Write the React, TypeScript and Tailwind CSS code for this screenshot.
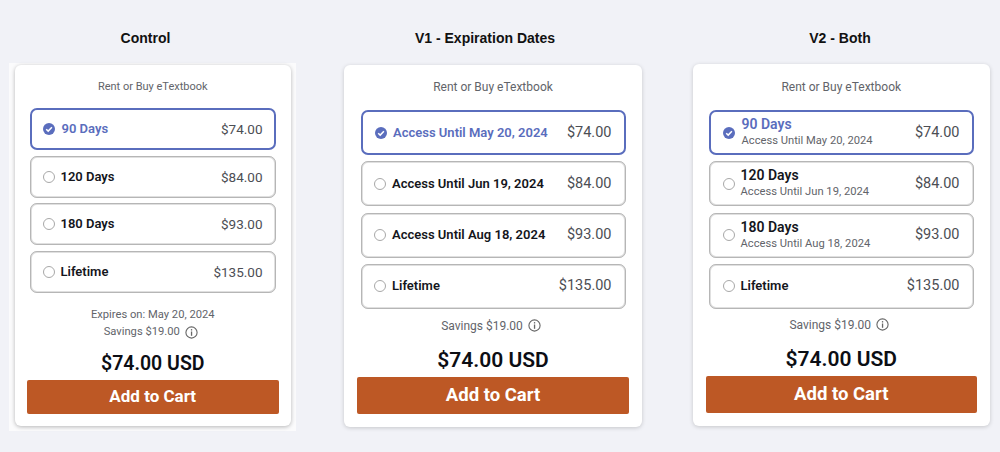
import React from "react";

const roboto = "font-['Roboto',sans-serif]";

function CheckDot({ cls }: { cls: string }) {
  return (
    <svg viewBox="0 0 12 12" className={cls}>
      <circle cx="6" cy="6" r="6" fill="#5a6dbd" />
      <path d="M3.2 6.2 L5.2 8.1 L8.9 4.2" fill="none" stroke="#fff" strokeWidth="1.5" />
    </svg>
  );
}

function InfoIcon() {
  return (
    <svg viewBox="0 0 13 13" className="h-[13px] w-[13px] shrink-0">
      <circle cx="6.5" cy="6.5" r="5.6" fill="none" stroke="#666" strokeWidth="1.1" />
      <rect x="5.9" y="3.1" width="1.3" height="1.4" fill="#666" />
      <rect x="5.9" y="5.5" width="1.3" height="4.3" fill="#666" />
    </svg>
  );
}

type Opt = { label: string; sub?: string; price: string; on?: boolean };

function Option({ o, box, priceCls }: { o: Opt; box: string; priceCls: string }) {
  return (
    <div
      className={`flex items-center rounded-[7px] border-2 bg-white ${box} ${
        o.on
          ? "border-[#5a6dbd]"
          : "border-[#e0e0e0] outline outline-1 -outline-offset-1 outline-[#b6b6b6]"
      }`}
    >
      {o.on ? (
        <CheckDot cls="h-[12px] w-[12px] shrink-0" />
      ) : (
        <span className="ml-[-0.5px] h-[12px] w-[12px] shrink-0 rounded-full border-[1.2px] border-[#a8a8a8]" />
      )}
      <div className={`flex min-w-0 flex-col ${o.on ? "ml-[6.5px]" : "ml-[6px]"}`}>
        <span
          className={`font-semibold ${o.sub ? "text-[14px] leading-[16px]" : "text-[13px] leading-[16px]"} ${
            o.on ? "text-[#5a6dbd]" : "text-[#14161c]"
          }`}
        >
          {o.label}
        </span>
        {o.sub && <span className="text-[11.2px] leading-[17px] text-[#62646a]">{o.sub}</span>}
      </div>
      <span className={`ml-auto leading-[16px] text-[#4c4e54] ${priceCls}`}>{o.price}</span>
    </div>
  );
}

const control: Opt[] = [
  { label: "90 Days", price: "$74.00", on: true },
  { label: "120 Days", price: "$84.00" },
  { label: "180 Days", price: "$93.00" },
  { label: "Lifetime", price: "$135.00" },
];
const v1: Opt[] = [
  { label: "Access Until May 20, 2024", price: "$74.00", on: true },
  { label: "Access Until Jun 19, 2024", price: "$84.00" },
  { label: "Access Until Aug 18, 2024", price: "$93.00" },
  { label: "Lifetime", price: "$135.00" },
];
const v2: Opt[] = [
  { label: "90 Days", sub: "Access Until May 20, 2024", price: "$74.00", on: true },
  { label: "120 Days", sub: "Access Until Jun 19, 2024", price: "$84.00" },
  { label: "180 Days", sub: "Access Until Aug 18, 2024", price: "$93.00" },
  { label: "Lifetime", price: "$135.00" },
];

function Heading({ text, cls }: { text: string; cls: string }) {
  return (
    <h2
      className={`h-[20px] text-center font-['Liberation_Sans',sans-serif] text-[14px] font-bold leading-[20px] text-[#111] ${cls}`}
    >
      {text}
    </h2>
  );
}

function Savings({ cls }: { cls: string }) {
  return (
    <div className={`flex items-center justify-center gap-[5px] pr-[4px] leading-[16px] text-[#62646a] ${cls}`}>
      <span>Savings $19.00</span>
      <InfoIcon />
    </div>
  );
}

export default function App() {
  return (
    <div className={`flex h-[452px] w-[1000px] items-start overflow-hidden bg-[#f1f2f7] pt-[28px] ${roboto}`}>
      {/* Control */}
      <div className="ml-[9px] flex w-[287px] flex-col">
        <Heading text="Control" cls="pr-[14px]" />
        <div className="mt-[15px] bg-[#fbfbfc] pb-[5px] pl-[5.5px] pr-[5px] pt-[2px]">
          <div className="flex h-[361px] w-[276.5px] flex-col rounded-[6px] bg-white px-[12px] pt-[14px] shadow-[0_1px_4px_rgba(0,0,0,0.28)]">
            <p className="text-center text-[11px] leading-[16px] text-[#62646a]">Rent or Buy eTextbook</p>
            <div className="mx-[3.5px] mt-[13px] flex flex-col gap-[5.7px]">
              {control.map((o) => (
                <Option key={o.label} o={o} box="h-[42px] pl-[11px] pr-[11px]" priceCls="text-[13.5px]" />
              ))}
            </div>
            <p className="mt-[14px] text-center text-[11.2px] leading-[16px] text-[#62646a]">
              Expires on: May 20, 2024
            </p>
            <Savings cls="mt-[1px] text-[11.2px]" />
            <p className="mt-[12px] text-center text-[19.5px] font-semibold leading-[24px] text-[#0c0e14]">$74.00 USD</p>
            <button className="mt-[4px] h-[34px] rounded-[2px] bg-[#bd5825] text-[17px] font-bold text-white">
              Add to Cart
            </button>
          </div>
        </div>
      </div>

      {/* V1 */}
      <div className="ml-[48px] flex w-[298px] flex-col">
        <Heading text="V1 - Expiration Dates" cls="pr-[16px]" />
        <div className="mt-[17px] flex h-[362px] flex-col rounded-[6px] bg-white px-[13px] pt-[14px] shadow-[0_1px_4px_rgba(0,0,0,0.18)]">
          <p className="text-center text-[12px] leading-[16px] text-[#62646a]">Rent or Buy eTextbook</p>
          <div className="mx-[3.5px] mt-[15px] flex flex-col gap-[6.3px]">
            {v1.map((o) => (
              <Option key={o.label} o={o} box="h-[45px] pl-[12px] pr-[12px]" priceCls="text-[14.5px]" />
            ))}
          </div>
          <Savings cls="mt-[9px] text-[12px]" />
          <p className="mt-[14px] text-center text-[21px] font-semibold leading-[24px] text-[#0c0e14]">$74.00 USD</p>
          <button className="mt-[5px] h-[37px] rounded-[2px] bg-[#bd5825] text-[18.5px] font-bold text-white">
            Add to Cart
          </button>
        </div>
      </div>

      {/* V2 */}
      <div className="ml-[51px] flex w-[297px] flex-col">
        <Heading text="V2 - Both" cls="pr-[3px]" />
        <div className="mt-[16px] flex h-[362px] flex-col rounded-[6px] bg-white pl-[12.5px] pr-[13px] pt-[15px] shadow-[0_1px_4px_rgba(0,0,0,0.18)]">
          <p className="text-center text-[12px] leading-[16px] text-[#62646a]">Rent or Buy eTextbook</p>
          <div className="mx-[3.5px] mt-[15px] flex flex-col gap-[6.3px]">
            {v2.map((o) => (
              <Option key={o.label} o={o} box="h-[45px] pl-[12px] pr-[12px]" priceCls="text-[14.5px]" />
            ))}
          </div>
          <Savings cls="mt-[8px] text-[12px]" />
          <p className="mt-[14px] text-center text-[21px] font-semibold leading-[24px] text-[#0c0e14]">$74.00 USD</p>
          <button className="mt-[5px] h-[37px] rounded-[2px] bg-[#bd5825] text-[18.5px] font-bold text-white">
            Add to Cart
          </button>
        </div>
      </div>
    </div>
  );
}
